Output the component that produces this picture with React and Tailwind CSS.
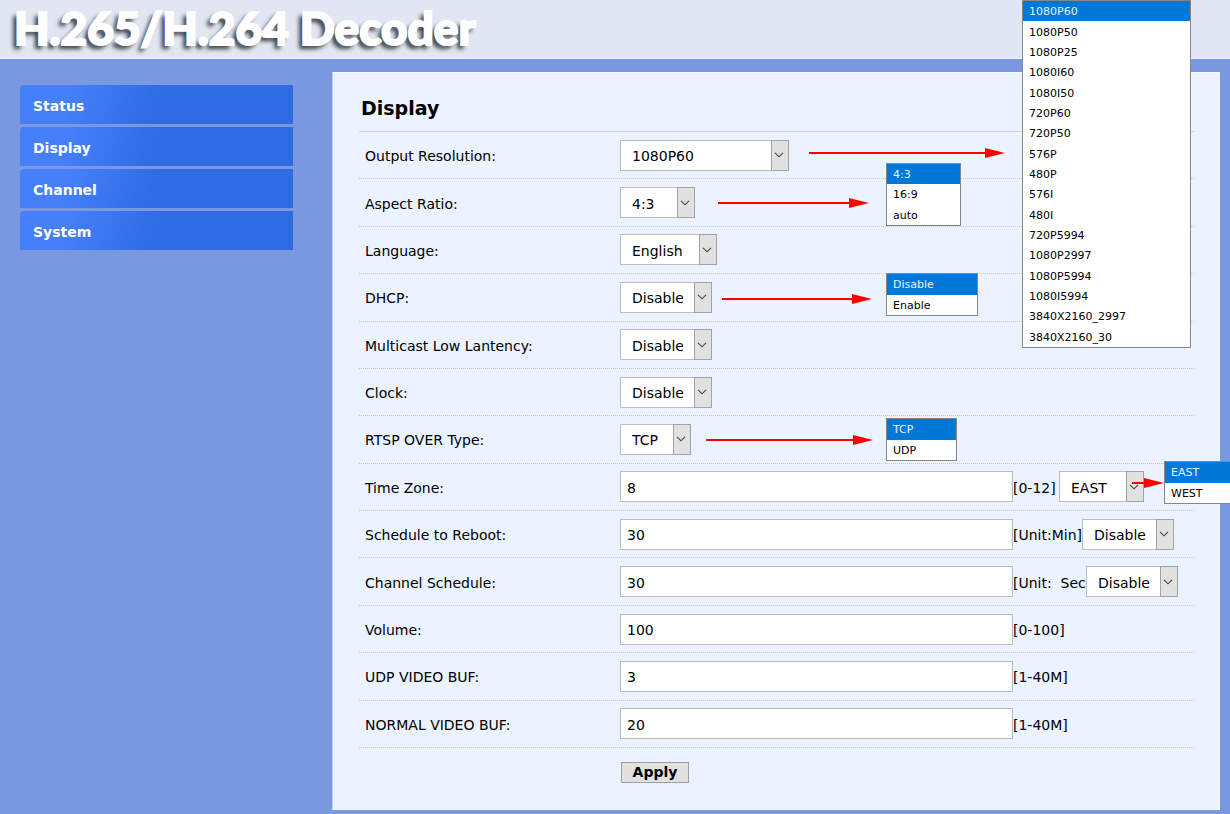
import React from "react";

const NAV_ITEMS = ["Status", "Display", "Channel", "System"];

const RESOLUTIONS = [
  "1080P60", "1080P50", "1080P25", "1080I60", "1080I50", "720P60",
  "720P50", "576P", "480P", "576I", "480I", "720P5994", "1080P2997",
  "1080P5994", "1080I5994", "3840X2160_2997", "3840X2160_30",
];
const SWITCH = ["Disable", "Enable"];

const ROWS = [
  { id: "resolution", label: "Output Resolution:", select: { options: RESOLUTIONS, width: "w-[169px]" } },
  { id: "aspect", label: "Aspect Ratio:", select: { options: ["4:3", "16:9", "auto"], width: "w-[75px]" } },
  { id: "language", label: "Language:", select: { options: ["English"], width: "w-[97px]" } },
  { id: "dhcp", label: "DHCP:", select: { options: SWITCH, width: "w-[92px]" } },
  { id: "multicast", label: "Multicast Low Lantency:", select: { options: SWITCH, width: "w-[92px]" } },
  { id: "clock", label: "Clock:", select: { options: SWITCH, width: "w-[92px]" } },
  { id: "rtsp", label: "RTSP OVER Type:", select: { options: ["TCP", "UDP"], width: "w-[71px]" } },
  { id: "timezone", label: "Time Zone:", value: "8", hint: "[0-12]", hintWidth: "w-[46px]", select: { options: ["EAST", "WEST"], width: "w-[85px]" } },
  { id: "reboot", label: "Schedule to Reboot:", value: "30", hint: "[Unit:Min]", hintWidth: "w-[69px]", select: { options: SWITCH, width: "w-[92px]" } },
  { id: "schedule", label: "Channel Schedule:", value: "30", hint: "[Unit:  Sec", hintWidth: "w-[73px]", select: { options: SWITCH, width: "w-[92px]" } },
  { id: "volume", label: "Volume:", value: "100", hint: "[0-100]", hintWidth: "w-auto" },
  { id: "udpbuf", label: "UDP VIDEO BUF:", value: "3", hint: "[1-40M]", hintWidth: "w-auto" },
  { id: "normalbuf", label: "NORMAL VIDEO BUF:", value: "20", hint: "[1-40M]", hintWidth: "w-auto" },
];

function Dropdown({ id, label, options, width }) {
  return (
    <div className={`grid h-[31px] shrink-0 ${width}`}>
      <select
        id={id}
        aria-label={label}
        defaultValue={options[0]}
        className="col-start-1 row-start-1 w-full appearance-none border border-[#bcbcbc] bg-white pt-[2px] pl-[11px] text-black"
      >
        {options.map((o) => (
          <option key={o}>{o}</option>
        ))}
      </select>
      <span className="pointer-events-none col-start-1 row-start-1 flex w-[18px] items-center justify-center justify-self-end border border-[#a3a3a3] bg-[#e1e1e1] pr-[2px]">
        <svg width="10" height="6" viewBox="0 0 10 6" fill="none" stroke="#444" strokeWidth="1.1">
          <path d="M1 0.8 L5 4.8 L9 0.8" />
        </svg>
      </span>
    </div>
  );
}

function Row({ id, label, value, hint, hintWidth, select }) {
  const hasInput = value !== undefined;
  return (
    <div className="flex items-center border-b border-dotted border-[#c8c8c8] pl-[6px]">
      <label htmlFor={id} className="w-[255px] shrink-0 pt-[2px]">{label}</label>
      {hasInput && (
        <>
          <input
            id={id}
            type="text"
            defaultValue={value}
            className="h-[31px] w-[393px] min-w-0 border border-[#bcbcbc] bg-white px-[6px] pt-[2px] text-black"
          />
          <span className={`shrink-0 pt-[2px] whitespace-pre ${hintWidth}`}>{hint}</span>
        </>
      )}
      {select && (
        <Dropdown
          id={hasInput ? `${id}-mode` : id}
          label={hasInput ? `${label} mode` : undefined}
          options={select.options}
          width={select.width}
        />
      )}
    </div>
  );
}

function OpenList({ items, className }) {
  return (
    <ul className={`absolute grid auto-rows-fr border border-[#868686] bg-white text-[11px] leading-[18px] text-black ${className}`}>
      {items.map((item, i) => (
        <li
          key={item}
          className={i === 0 ? "flex items-center bg-[#0078d7] pt-[2px] pl-[6px] text-[#e6f4ff]" : "flex items-center pt-[2px] pl-[6px]"}
        >
          {item}
        </li>
      ))}
    </ul>
  );
}

function Arrow({ length, className }) {
  return (
    <svg className={`absolute ${className}`} width={length} height="10" viewBox={`0 0 ${length} 10`} fill="red" aria-hidden="true">
      <rect x="0" y="4" width={length - 18} height="2" />
      <path d={`M${length - 20} 0 L${length} 5 L${length - 20} 10 Z`} />
    </svg>
  );
}

export default function App() {
  return (
    <div className="relative min-h-screen overflow-hidden bg-[#7998e0] font-['Verdana','DejaVu_Sans',sans-serif] text-[14px] leading-[20px] text-black">
      <header className="flex h-[59px] items-start border-b border-[#eef1f8] bg-[#e1e6f2] pl-[14px]">
        <h1 className="font-['Lato',sans-serif] text-[46px] leading-[56px] font-black whitespace-nowrap text-white [-webkit-text-stroke:2px_white] [text-shadow:-4px_4px_4px_#3a3d42]">
          H.265/H.264 Decoder
        </h1>
      </header>

      <div className="flex items-start pt-[13px] pr-[10px] pb-[4px] pl-[20px]">
        <nav className="mt-[13px] mr-[39px] flex w-[273px] shrink-0 flex-col gap-[3px]">
          {NAV_ITEMS.map((item) => (
            <a
              key={item}
              href={`#${item.toLowerCase()}`}
              className="flex h-[39px] items-center rounded-tl-[4px] bg-[linear-gradient(110deg,#4580fa_0%,#4580fa_18%,#2f6be3_50%,#2f6be3_100%)] pt-[2px] pl-[13px] font-bold text-white"
            >
              {item}
            </a>
          ))}
        </nav>

        <main className="min-w-0 grow border border-[#f5fbff] border-l-[#b9cdf3] bg-[#eaf3ff] pr-[25px] pb-[26px] pl-[26px]">
          <h2 className="border-b border-[#cfd6de] pt-[22px] pb-[10px] pl-[2px] text-[19px] leading-[26px] font-bold">Display</h2>
          <form onSubmit={(e) => e.preventDefault()}>
            <div className="grid min-h-[616px] auto-rows-fr">
              {ROWS.map((row) => (
                <Row key={row.id} {...row} />
              ))}
            </div>
            <button type="submit" className="mt-[14px] ml-[262px] block h-[21px] w-[68px] border border-[#a0a0a0] bg-[#e1e1e1] leading-[19px] font-bold">
              Apply
            </button>
          </form>
        </main>
      </div>

      <Arrow length={196} className="top-[148px] left-[809px]" />
      <Arrow length={151} className="top-[198px] left-[718px]" />
      <Arrow length={150} className="top-[294px] left-[722px]" />
      <Arrow length={167} className="top-[435px] left-[706px]" />
      <Arrow length={32} className="top-[478px] left-[1132px]" />

      <OpenList items={RESOLUTIONS} className="top-0 left-[1022px] h-[348px] w-[169px]" />
      <OpenList items={["4:3", "16:9", "auto"]} className="top-[163px] left-[886px] h-[63px] w-[75px]" />
      <OpenList items={SWITCH} className="top-[273px] left-[886px] h-[43px] w-[92px]" />
      <OpenList items={["TCP", "UDP"]} className="top-[418px] left-[886px] h-[43px] w-[71px]" />
      <OpenList items={["EAST", "WEST"]} className="top-[461px] left-[1164px] h-[43px] w-[85px]" />
    </div>
  );
}
